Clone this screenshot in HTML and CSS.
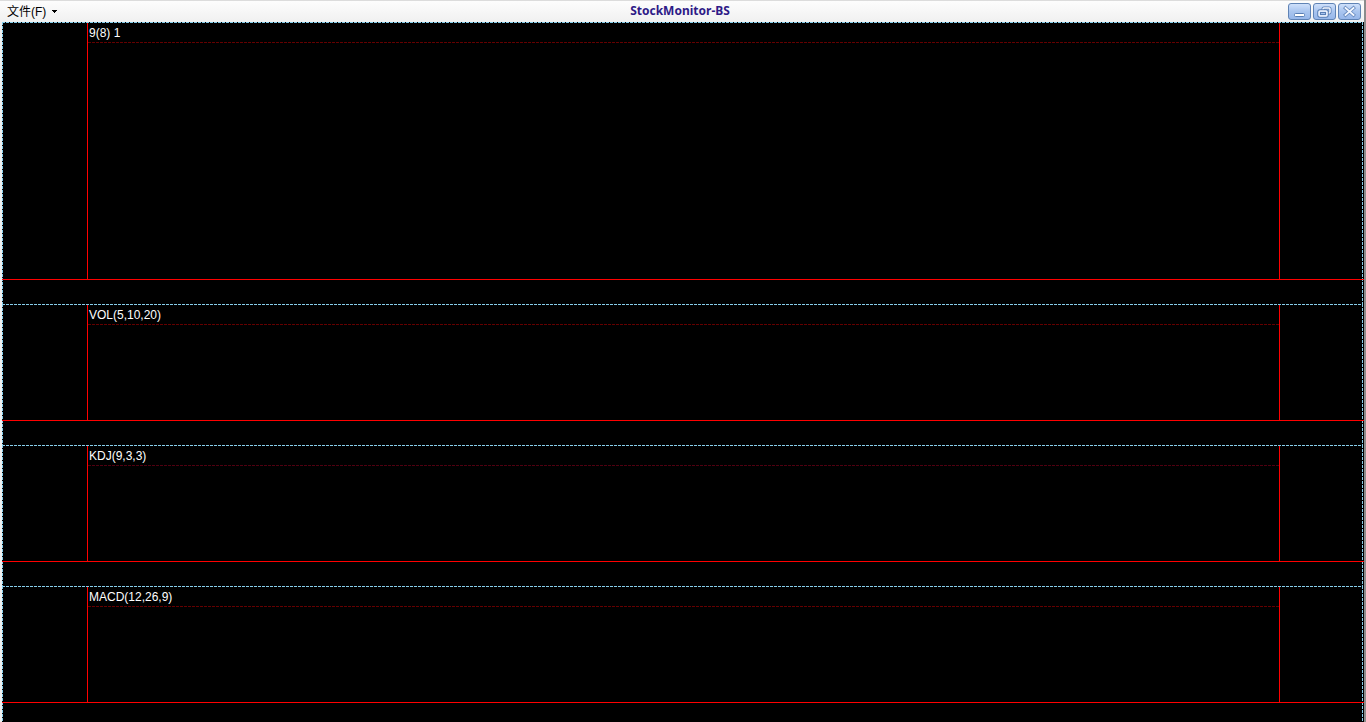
FILE: index.html
```
<!DOCTYPE HTML>
<html lang="zh">
<head>
<meta charset="utf-8">
<title>StockMonitor-BS</title>
<link rel="stylesheet" href="styles.css">
</head>

<body>
<div class="window">
	<header class="titlebar">
		<button type="button" class="menu">文件(F)
			<svg width="5" height="3" viewBox="0 0 5 3"><path d="M0 0h5v1h-1v1h-1v1h-1v-1h-1v-1h-1z" shape-rendering="crispEdges"/></svg>
		</button>
		<h1 class="caption">StockMonitor-BS</h1>
		<div class="buttons">
			<button type="button" class="winbtn" aria-label="最小化">
				<svg width="21" height="15" viewBox="0 0 21 15"><rect x="5.5" y="9.5" width="10" height="3" rx="1" fill="#fff" stroke="#5a7fb5"/></svg>
			</button>
			<button type="button" class="winbtn" aria-label="还原">
				<svg width="21" height="15" viewBox="0 0 21 15" fill="none">
					<rect x="9" y="4" width="7" height="5" rx="1" stroke="#5a7fb5" stroke-width="3"/>
					<rect x="9" y="4" width="7" height="5" rx="1" stroke="#f4f8ff" stroke-width="1.500"/>
					<rect x="5" y="7" width="8" height="5" rx="1" fill="#a6c3ee" stroke="#5a7fb5" stroke-width="3.500"/>
					<rect x="5" y="7" width="8" height="5" rx="1" fill="#a6c3ee" stroke="#f4f8ff" stroke-width="1.500"/>
					<rect x="6.500" y="8.500" width="5" height="2" stroke="#5a7fb5"/>
				</svg>
			</button>
			<button type="button" class="winbtn" aria-label="关闭">
				<svg width="21" height="15" viewBox="0 0 21 15" fill="none" stroke-linecap="square">
					<path d="M6.500 4l8 7M14.500 4l-8 7" stroke="#6a8cbf" stroke-width="3.500"/>
					<path d="M6.500 4l8 7M14.500 4l-8 7" stroke="#f4f8ff" stroke-width="1.800"/>
				</svg>
			</button>
		</div>
	</header>
	<main class="charts">
		<section class="chart main">
			<div class="plot"><h2 class="name">9(8) 1</h2></div>
		</section>
		<section class="chart">
			<div class="plot"><h2 class="name">VOL(5,10,20)</h2></div>
		</section>
		<section class="chart">
			<div class="plot"><h2 class="name dim">KDJ(9,3,3)</h2></div>
		</section>
		<section class="chart">
			<div class="plot"><h2 class="name">MACD(12,26,9)</h2></div>
		</section>
	</main>
</div>
</body>
</html>
```

FILE: styles.css
```
* { box-sizing:border-box;}
body { margin:0; height:100vh; overflow:hidden; background:#f0f0f0; font-family:"Liberation Sans","Noto Sans CJK SC",sans-serif;}
h1,h2 { margin:0;}
button { padding:0; font:inherit;}
.window { padding-left:2px; border-right:2px solid #8c8c8c;}
.titlebar { display:grid; grid-template-columns:1fr auto 1fr; height:22px; margin-left:-2px; border-top:1px solid #dcdcdc; background:linear-gradient(#fdfdfd,#f0f0f0);}
.menu { display:flex; align-items:center; justify-self:start; gap:6px; height:14px; margin-top:4px; padding-left:7px; overflow:hidden; border:0; background:none; color:#000; font-size:12px; line-height:14px;}
.menu svg { margin-bottom:2px;}
.caption { padding-right:4px; color:#2e1a87; font:bold 12px/20px "Noto Sans","Open Sans",sans-serif;}
.buttons { display:flex; justify-content:flex-end; gap:2px; padding:2px 3px 0 0;}
.winbtn { display:flex; width:23px; height:17px; border:1px solid #5f83b5; border-radius:3px; background:linear-gradient(#cfe0fa,#a9c5ef 50%,#97b7ea);}

/* charts */
.charts { background:#000;}
.chart {
	height:141px;
	padding:1px 0 24px;
	background:
		linear-gradient(#000,#000) 100% 0 / 1px 1px no-repeat,
		repeating-linear-gradient(90deg,#87ceeb 0 3px,#000 3px 4px) 0 0 / 100% 1px no-repeat,
		repeating-linear-gradient(#87ceeb 0 3px,#000 3px 4px) 0 0 / 1px 100% no-repeat,
		repeating-linear-gradient(#87ceeb 0 3px,#000 3px 4px) right 1px top 0 / 1px 100% no-repeat;
}
.chart.main { height:282px;}
.plot { height:100%; padding:0 84px 0 85px; border-bottom:1px solid #f00; background:linear-gradient(#f00,#f00) 85px 0 / 1px 100% no-repeat,linear-gradient(#f00,#f00) right 84px top 0 / 1px 100% no-repeat;}
.name { height:20px; margin:0 1px; padding-left:1px; background:repeating-linear-gradient(90deg,#640000 0 3px,#000 3px 4px) 0 100% / 100% 1px no-repeat; color:#fff; font-size:12px; font-weight:normal; line-height:20px;}
.name.dim { background-image:repeating-linear-gradient(90deg,#500010 0 3px,#000 3px 4px);}
```
